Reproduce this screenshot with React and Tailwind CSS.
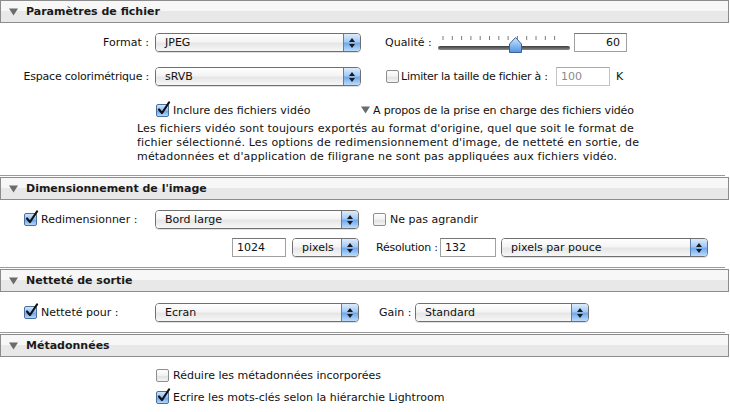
import React from 'react';

const FONT = "font-['Lucida_Grande','DejaVu_Sans',sans-serif]";

function Triangle({ className = '' }) {
  return (
    <svg width="9" height="8" viewBox="0 0 9 8" className={className}>
      <path d="M0 0.5 L9 0.5 L4.5 7.5 Z" fill="#6b6b6b" />
    </svg>
  );
}

function SectionHeader({ title }) {
  return (
    <div className="flex h-[23px] w-[729px] items-center border border-[#8c8c8c] bg-[linear-gradient(to_bottom,#f7f7f7_50%,#e8e8e8_50%)]">
      <Triangle className="ml-[8px]" />
      <span className="ml-[8px] text-[11px] font-bold text-[#1a1a1a]">{title}</span>
    </div>
  );
}

function Separator() {
  return <div className="mb-[1px] h-px w-[725px] bg-[#9a9a9a]" />;
}

function Popup({ text, className = '' }) {
  return (
    <div className={`flex h-[19px] shrink-0 overflow-hidden rounded-[4px] border border-[#707070] shadow-[0_1px_0_rgba(0,0,0,0.12)] ${className}`}>
      <div className="flex flex-1 items-center bg-[linear-gradient(to_bottom,#ffffff_0%,#f4f4f4_45%,#e6e6e6_55%,#f7f7f7_100%)] pl-[9px] text-[11px] text-[#111]">
        {text}
      </div>
      <div className="flex w-[17px] flex-col items-center justify-center gap-[2px] border-l border-[#5a7fb0] bg-[linear-gradient(to_bottom,#dcebfc_0%,#a3caf5_45%,#6ea9ee_55%,#bcdcfc_100%)]">
        <svg width="6" height="4" viewBox="0 0 6 4"><path d="M0 4 L3 0 L6 4 Z" fill="#1b1b1b" /></svg>
        <svg width="6" height="4" viewBox="0 0 6 4"><path d="M0 0 L6 0 L3 4 Z" fill="#1b1b1b" /></svg>
      </div>
    </div>
  );
}

function Checkbox({ checked }) {
  return (
    <div className="relative h-[13px] w-[13px] shrink-0">
      <div
        className={
          checked
            ? 'h-[13px] w-[13px] rounded-[2px] border border-[#4d6f9e] bg-[linear-gradient(to_bottom,#cfe4fb_0%,#8fbdf1_50%,#6aa6ec_55%,#b5d7fb_100%)]'
            : 'h-[13px] w-[13px] rounded-[2px] border border-[#8e8e8e] bg-[linear-gradient(to_bottom,#ffffff_0%,#f1f1f1_50%,#e2e2e2_55%,#f4f4f4_100%)]'
        }
      />
      {checked && (
        <svg width="14" height="15" viewBox="0 0 14 15" className="absolute left-[1px] top-[-3px]">
          <path d="M2 8.5 L5 12 L12 1.5" fill="none" stroke="#111" strokeWidth="2.2" strokeLinecap="round" strokeLinejoin="round" />
        </svg>
      )}
    </div>
  );
}

function TextField({ value, className = '', muted, right }) {
  return (
    <div
      className={`flex h-[19px] shrink-0 items-center border border-[#a0a0a0] border-t-[#777] bg-white px-[4px] text-[11px] ${muted ? 'text-[#8a8a8a]' : 'text-[#111]'} ${right ? 'justify-end' : ''} ${className}`}
    >
      {value}
    </div>
  );
}

function Slider() {
  const ticks = Array.from({ length: 13 }, (_, i) => 7 + i * 9.3);
  return (
    <svg width="136" height="22" viewBox="0 0 136 22" className="shrink-0">
      <defs>
        <linearGradient id="trk" x1="0" y1="0" x2="0" y2="1">
          <stop offset="0" stopColor="#3f3f3f" />
          <stop offset="1" stopColor="#8a8a8a" />
        </linearGradient>
        <linearGradient id="thb" x1="0" y1="0" x2="0" y2="1">
          <stop offset="0" stopColor="#d6e8fc" />
          <stop offset="0.5" stopColor="#8dbdf2" />
          <stop offset="1" stopColor="#4f93e6" />
        </linearGradient>
      </defs>
      {ticks.map((x, i) => (
        <line key={i} x1={x} y1="4" x2={x} y2="8" stroke="#7a7a7a" strokeWidth="1" />
      ))}
      <rect x="2" y="14" width="132" height="4" rx="2" fill="url(#trk)" />
      <path d="M73.5 20.5 L73.5 12 L79.5 5.5 L85.5 12 L85.5 20.5 Z" fill="url(#thb)" stroke="#3f5f8f" strokeWidth="1" />
    </svg>
  );
}

export default function App() {
  return (
    <div className={`h-[412px] w-[730px] overflow-hidden whitespace-nowrap bg-white ${FONT} text-[11px] leading-none text-[#111]`}>
      {/* Paramètres de fichier */}
      <SectionHeader title="Paramètres de fichier" />
      <div className="mt-[10px] flex h-[19px] items-center">
        <div className="w-[149px] text-right">Format :</div>
        <Popup text="JPEG" className="ml-[6px] w-[206px]" />
        <div className="ml-[24px] w-[51px]">Qualité :</div>
        <Slider />
        <TextField value="60" right className="ml-[2px] w-[53px] pr-[6px]" />
      </div>
      <div className="mt-[15px] flex h-[19px] items-center">
        <div className="w-[149px] text-right tracking-[-0.2px]">Espace colorimétrique :</div>
        <Popup text="sRVB" className="ml-[6px] w-[206px]" />
        <div className="ml-[25px]"><Checkbox /></div>
        <div className="ml-[2px] w-[155px] tracking-[-0.25px]">Limiter la taille de fichier à :</div>
        <TextField value="100" muted className="w-[54px] border-[#c4c4c4] border-t-[#a9a9a9]" />
        <div className="ml-[6px]">K</div>
      </div>
      <div className="mt-[16px] flex h-[16px] items-center">
        <div className="ml-[156px]"><Checkbox checked /></div>
        <div className="ml-[4px] w-[188px]">Inclure des fichiers vidéo</div>
        <Triangle />
        <div className="ml-[3px] tracking-[-0.15px]">A propos de la prise en charge des fichiers vidéo</div>
      </div>
      <div className="mt-[4px] pl-[137px] leading-[14px] tracking-[0.18px]">
        Les fichiers vidéo sont toujours exportés au format d'origine, quel que soit le format de
        <br />
        fichier sélectionné. Les options de redimensionnement d'image, de netteté en sortie, de
        <br />
        métadonnées et d'application de filigrane ne sont pas appliquées aux fichiers vidéo.
      </div>
      <div className="mt-[11px]"><Separator /></div>

      {/* Dimensionnement de l'image */}
      <SectionHeader title="Dimensionnement de l'image" />
      <div className="mt-[10px] flex h-[19px] items-center">
        <div className="ml-[24px]"><Checkbox checked /></div>
        <div className="ml-[4px] w-[114px]">Redimensionner :</div>
        <Popup text="Bord large" className="w-[204px]" />
        <div className="ml-[14px]"><Checkbox /></div>
        <div className="ml-[4px]">Ne pas agrandir</div>
      </div>
      <div className="mt-[9px] flex h-[19px] items-center">
        <TextField value="1024" className="ml-[232px] w-[54px]" />
        <Popup text="pixels" className="ml-[6px] w-[67px]" />
        <div className="ml-[17px] w-[64px] tracking-[-0.25px]">Résolution :</div>
        <TextField value="132" className="w-[56px]" />
        <Popup text="pixels par pouce" className="ml-[5px] w-[207px]" />
      </div>
      <div className="mt-[10px]"><Separator /></div>

      {/* Netteté de sortie */}
      <SectionHeader title="Netteté de sortie" />
      <div className="mt-[11px] flex h-[19px] items-center">
        <div className="ml-[24px]"><Checkbox checked /></div>
        <div className="ml-[4px] w-[114px]">Netteté pour :</div>
        <Popup text="Ecran" className="w-[204px]" />
        <div className="ml-[20px] w-[36px]">Gain :</div>
        <Popup text="Standard" className="w-[174px]" />
      </div>
      <div className="mt-[10px]"><Separator /></div>

      {/* Métadonnées */}
      <SectionHeader title="Métadonnées" />
      <div className="mt-[12px] flex h-[13px] items-center">
        <div className="ml-[156px]"><Checkbox /></div>
        <div className="ml-[4px]">Réduire les métadonnées incorporées</div>
      </div>
      <div className="mt-[9px] flex h-[13px] items-center">
        <div className="ml-[156px]"><Checkbox checked /></div>
        <div className="ml-[4px]">Ecrire les mots-clés selon la hiérarchie Lightroom</div>
      </div>
    </div>
  );
}
